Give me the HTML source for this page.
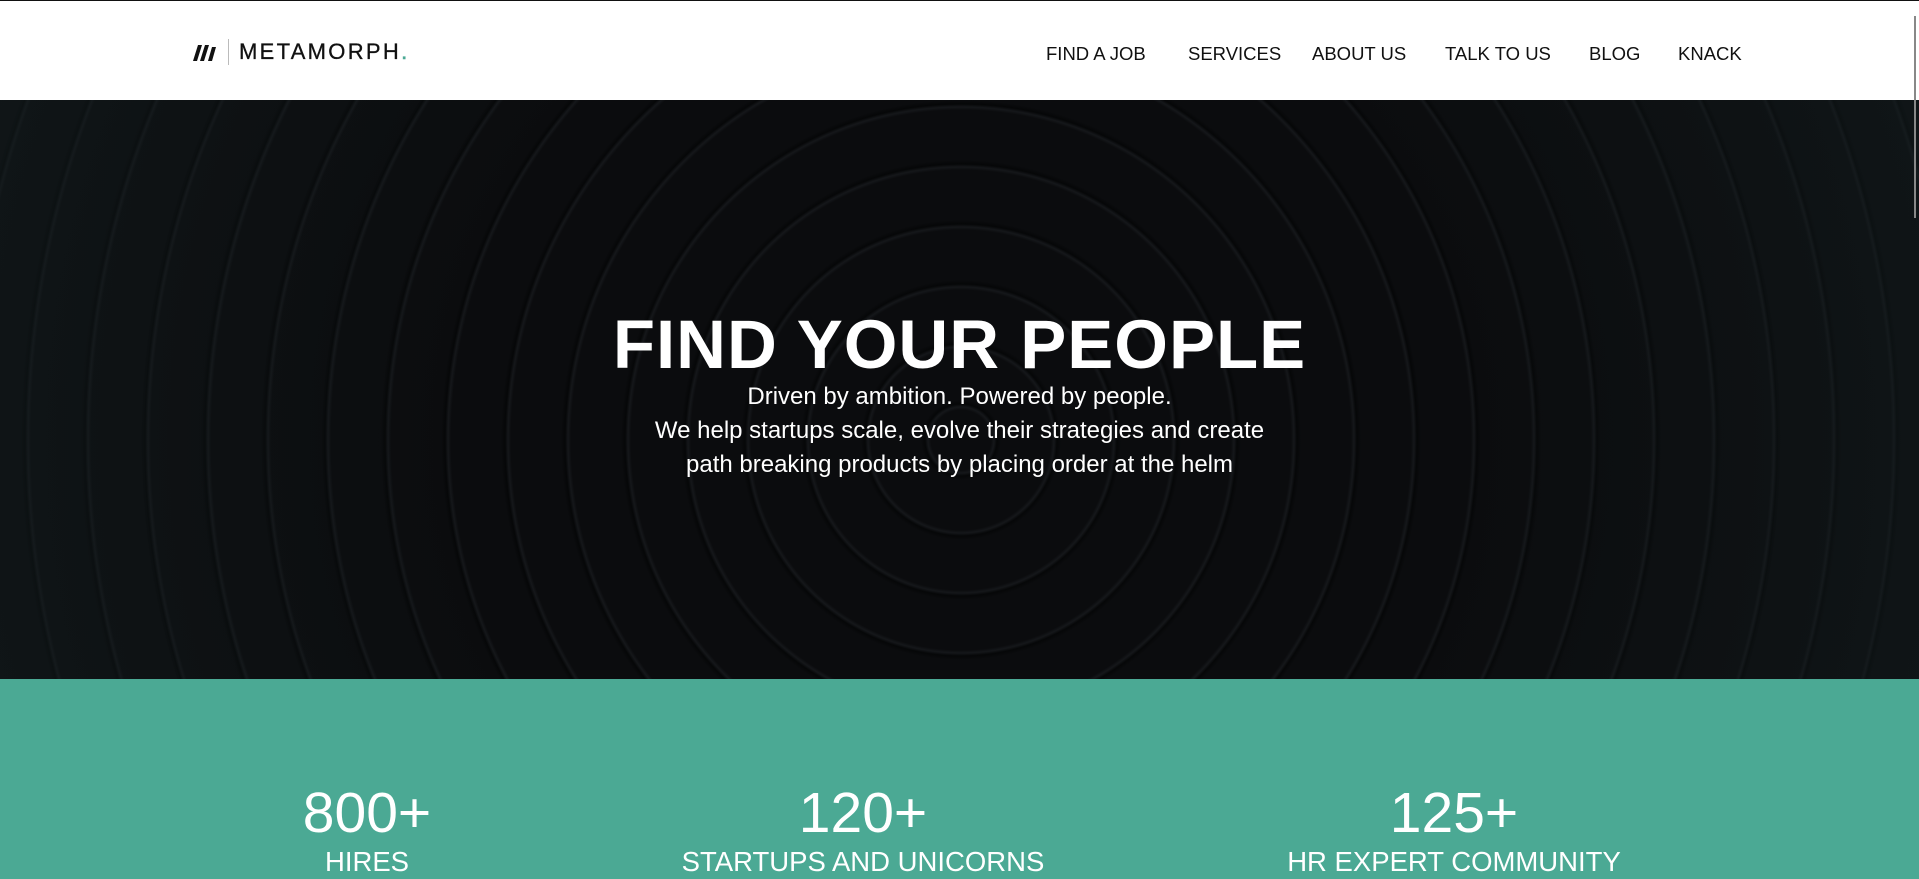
<!DOCTYPE html>
<html><head><meta charset="utf-8"><style>
*{margin:0;padding:0;box-sizing:border-box}
body{width:1919px;height:879px;overflow:hidden;font-family:"Liberation Sans",sans-serif;background:#fff;position:relative}
.hdr{position:absolute;left:0;top:0;width:1919px;height:100px;background:#fff;border-top:1px solid #111}
.logo{position:absolute;left:192px;top:38px;display:flex;align-items:center}
.logo .txt{font-size:22px;letter-spacing:2.3px;color:#111;margin-left:10px;padding-left:10px;border-left:1px solid #bbb;line-height:26px;-webkit-text-stroke:0.3px #111}
.logo .dot{color:#4ba994;-webkit-text-stroke:0.6px #4ba994}
.nav a{position:absolute;top:42px;font-size:18.5px;color:#111;text-decoration:none;white-space:nowrap}
.hero{position:absolute;left:0;top:100px;width:1919px;height:579px;overflow:hidden;
background:radial-gradient(circle at 961px 340px,rgba(0,0,0,0) 0,rgba(0,0,0,0) 500px,rgba(20,30,32,.6) 1100px),
repeating-radial-gradient(circle at 961px 340px,#0b0c0e 0,#0b0c0e 30px,#15171a 33px,#060708 36px,#0b0c0e 40px,#0b0c0e 60px);}
.hero h1{position:absolute;left:0;width:1919px;top:205px;text-align:center;color:#fff;font-size:69px;font-weight:bold;letter-spacing:1px}
.hero p{position:absolute;left:0;width:1919px;top:280px;text-align:center;color:#fff;font-size:24px;line-height:34px}
.stats{position:absolute;left:0;top:679px;width:1919px;height:200px;background:#4ba994;color:#fff}
.st{position:absolute;top:102px;width:600px;margin-left:-300px;text-align:center}
.st .n{font-size:57px;line-height:64px}
.st .l{font-size:27.5px;line-height:34px}
.sb{position:absolute;left:1914px;top:16px;width:2px;height:202px;background:#888}
</style></head><body>
<div class="hdr">
 <div class="logo">
  <svg width="26" height="20" viewBox="0 0 26 20"><path d="M1 19 L6 3 L10 3 L5 19Z M8 19 L13 3 L17 3 L12 19Z M16 19 L20 5 L24 5 L20 19Z" fill="#111"/></svg>
  <span class="txt">METAMORPH<span class="dot">.</span></span>
 </div>
 <div class="nav">
  <a style="left:1046px">FIND A JOB</a><a style="left:1188px">SERVICES</a><a style="left:1312px">ABOUT US</a><a style="left:1445px">TALK TO US</a><a style="left:1589px">BLOG</a><a style="left:1678px">KNACK</a>
 </div>
</div>
<div class="hero">
 <h1>FIND YOUR PEOPLE</h1>
 <p>Driven by ambition. Powered by people.<br>We help startups scale, evolve their strategies and create<br>path breaking products by placing order at the helm</p>
</div>
<div class="stats">
 <div class="st" style="left:367px"><div class="n">800+</div><div class="l">HIRES</div></div>
 <div class="st" style="left:863px"><div class="n">120+</div><div class="l">STARTUPS AND UNICORNS</div></div>
 <div class="st" style="left:1454px"><div class="n">125+</div><div class="l">HR EXPERT COMMUNITY</div></div>
</div>
<div class="sb"></div>
</body></html>
